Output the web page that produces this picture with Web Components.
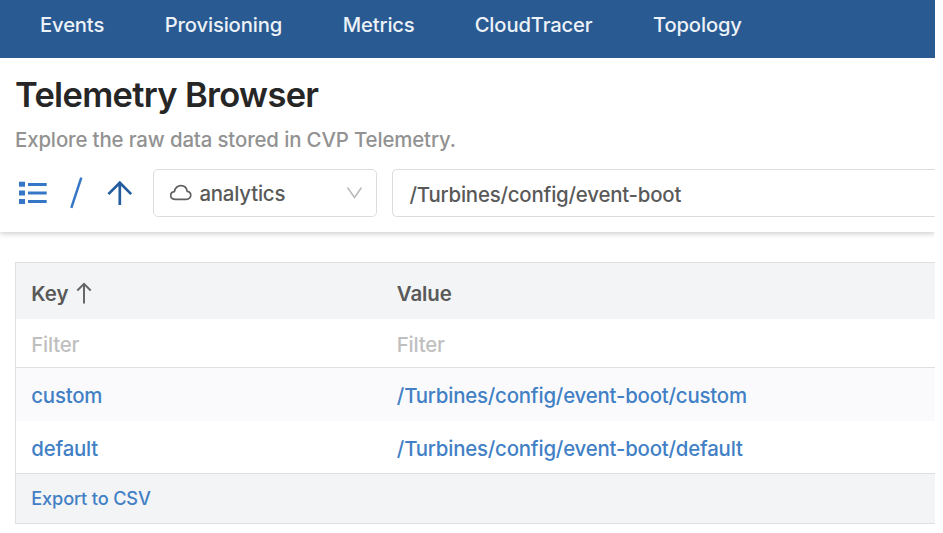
<!DOCTYPE html>
<html lang="en"><head><meta charset="utf-8"><title>Telemetry Browser</title>
<style>html,body{margin:0;background:#fff}body{width:943px;height:533px;overflow:hidden;font-family:Inter,"Liberation Sans",sans-serif;font-weight:450;letter-spacing:-.2px}</style></head>
<body><telemetry-page></telemetry-page>
<script>
const define=(name,html)=>{const t=document.createElement('template');t.innerHTML=html;
customElements.define(name,class extends HTMLElement{constructor(){super();this.attachShadow({mode:'open'}).append(t.content.cloneNode(true));}});};

define('nav-link',`<style>:host{display:block;white-space:nowrap;line-height:24px}</style><slot></slot>`);
define('nav-bar',`<style>:host{display:grid;grid-template-columns:124.7px 178px 132px 178.3px 1fr;box-sizing:border-box;width:934.5px;height:57.6px;padding:13px 0 0 40px;background:#295b92;color:#edf2f8;font-size:20.2px;font-weight:500;letter-spacing:-.13px}</style><slot></slot>`);
define('page-title',`<style>:host{display:block;padding:15.4px 0 0 15px;color:#262626}h1{margin:0;font-size:34.5px;line-height:44px;font-weight:600;letter-spacing:-.68px;white-space:nowrap}p{margin:10.6px 0 0;font-size:20.4px;line-height:24px;color:#929292;white-space:nowrap;letter-spacing:-.13px}</style><h1><slot name="title"></slot></h1><p><slot></slot></p>`);
define('tool-icons',`<style>:host{display:block;width:152.6px;height:48px}svg{display:block}</style>
<svg width="152" height="48" fill="none" stroke="#3577c6"><g fill="#3577c6" stroke="none"><rect x="19" y="12.7" width="6" height="5"/><rect x="19" y="21.5" width="6" height="5"/><rect x="19" y="30" width="6" height="5"/></g><path stroke-width="3" d="M28 15.4h18.7M28 24h18.7M28 32.5h18.7"/><path stroke-width="2.5" d="M71.3 38.8 81.3 8.7"/><path stroke="#235d9e" stroke-width="2.7" d="M119.8 36V14M108.4 25.1 119.8 13.7 131.2 25.1"/></svg>`);
define('source-select',`<style>:host{display:flex;box-sizing:border-box;width:224.5px;height:48px;border:1.5px solid #dcdcdc;border-radius:5px;align-items:center;padding:0 13px 0 16.3px;color:#595959;font-size:20.4px}div{margin-left:7.5px;line-height:24px;padding-top:2px;flex:1}</style>
<svg width="22" height="18" fill="none" stroke="#606060" stroke-width="1.7"><path d="M5.5 15.3C-.7 15.2-.7 8.5 4.3 7.7 6.2-.3 15.8-.3 17.2 7.3c5 .8 4.7 7.8-1 8Z"/></svg><div><slot></slot></div><svg width="17" height="14" fill="none" stroke="#bcbcbc" stroke-width="1.6"><path d="M1.5 1.5 8.5 11.5 15.5 1.5"/></svg>`);
define('path-field',`<style>:host{display:flex;flex:1;box-sizing:border-box;height:48px;margin-left:15.4px;border:1.5px solid #dcdcdc;border-right:0;border-radius:5px 0 0 5px;padding:2.5px 0 0 16px;align-items:center;color:#595959;font-size:20.4px;white-space:nowrap}</style><slot></slot>`);
define('tool-bar',`<style>:host{display:flex;box-sizing:border-box;width:934.5px;height:63.5px;margin-top:17.4px;box-shadow:0 2px 5px #0000002e;clip-path:inset(0 0 -12px 0)}</style><slot></slot>`);
define('sort-arrow',`<style>:host{display:inline-block;margin:-3px 0 0 7.5px}svg{display:block}</style><svg width="16" height="22" fill="none" stroke="#666" stroke-width="2"><path d="M8 21.5V2M1.3 8.5 8 1.8 14.7 8.5"/></svg>`);
define('data-row',`<style>:host{display:grid;grid-template-columns:365.5px 1fr;align-items:center;box-sizing:border-box;padding:2px 0 0 15.3px;line-height:24px;white-space:nowrap;font-size:20.4px}
:host([kind=head]){height:56px;padding-top:7px;background:#f3f4f6;color:#595959;font-weight:600;letter-spacing:-.05px}:host([kind=filter]){height:49.5px;padding-top:3.5px;border-bottom:1.7px solid #dedfe1;color:#bfbfbf}:host([kind=odd]){height:53px;background:#fafafc;color:#4180c5}:host([kind=even]){height:53px;padding-top:3.4px;border-bottom:1.7px solid #dedfe1;color:#4180c5}:host([kind=foot]){height:49px;padding:0 0 1.5px 15.3px;background:#f3f4f6;color:#4180c5;font-size:18.2px;letter-spacing:-.17px}div{display:flex;align-items:center}</style><div><slot name="key"></slot></div><div><slot></slot></div>`);
define('data-table',`<style>:host{display:block;box-sizing:border-box;width:919.5px;margin:29.5px 0 0 15px;border:1.7px solid #dedfe1;border-right:0}</style><slot></slot>`);
define('telemetry-page',`<style>:host{display:block;width:943px;height:533px;overflow:hidden}</style>
<nav-bar><nav-link>Events</nav-link><nav-link>Provisioning</nav-link><nav-link>Metrics</nav-link><nav-link>CloudTracer</nav-link><nav-link>Topology</nav-link></nav-bar>
<page-title><span slot="title">Telemetry Browser</span><span>Explore the raw data stored in CVP Telemetry.</span></page-title>
<tool-bar><tool-icons></tool-icons><source-select><span>analytics</span></source-select><path-field><span>/Turbines/config/event-boot</span></path-field></tool-bar>
<data-table><data-row kind="head"><span slot="key">Key</span><sort-arrow slot="key"></sort-arrow><span>Value</span></data-row>
<data-row kind="filter"><span slot="key">Filter</span><span>Filter</span></data-row>
<data-row kind="odd"><span slot="key">custom</span><span>/Turbines/config/event-boot/custom</span></data-row>
<data-row kind="even"><span slot="key">default</span><span>/Turbines/config/event-boot/default</span></data-row>
<data-row kind="foot"><span slot="key">Export to CSV</span></data-row></data-table>`);
</script></body></html>
